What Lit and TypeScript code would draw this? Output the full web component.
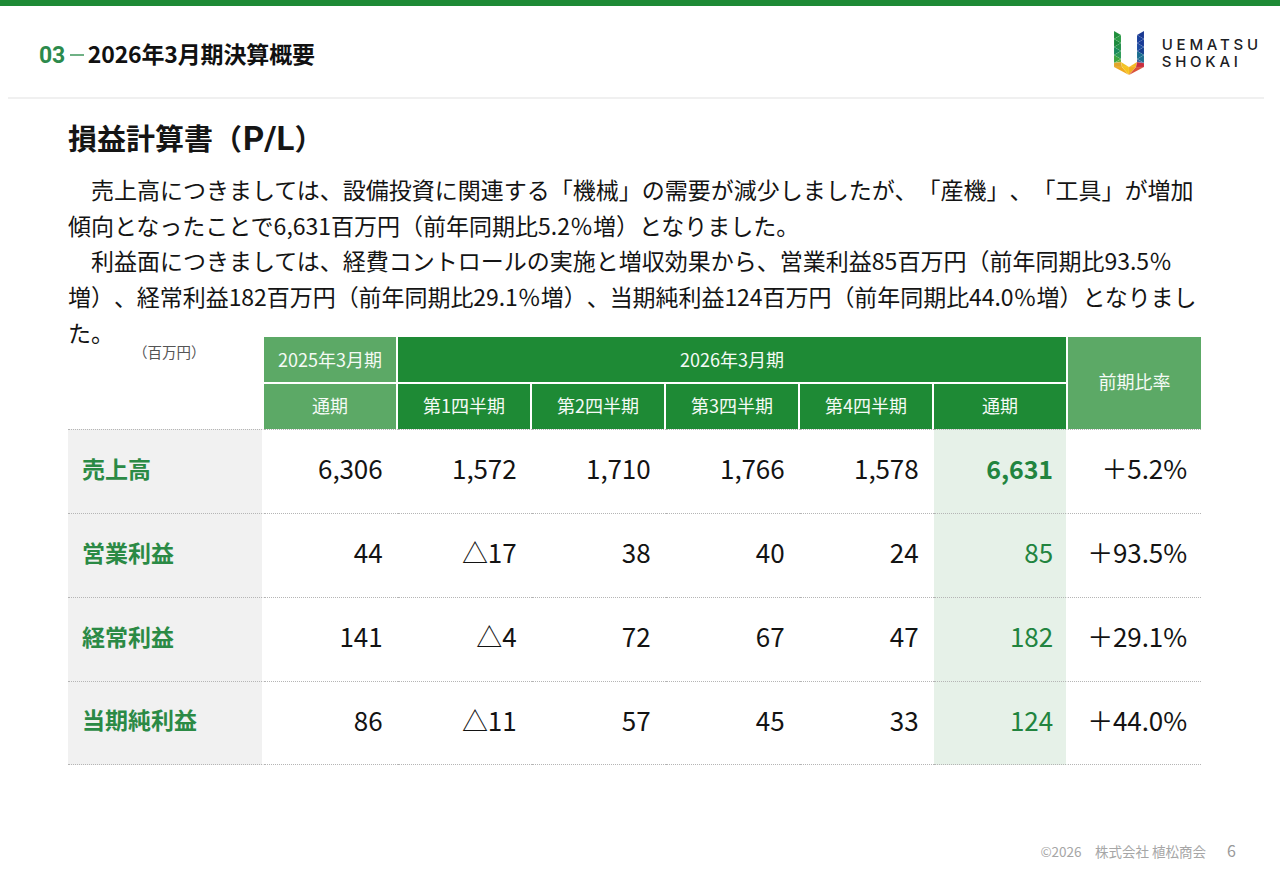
import { LitElement, html, css, svg } from "lit";
import { customElement } from "lit/decorators.js";

const rows = [
  { label: "売上高", cells: ["6,306", "1,572", "1,710", "1,766", "1,578", "6,631"], ratio: "＋5.2%", strong: true },
  { label: "営業利益", cells: ["44", "△17", "38", "40", "24", "85"], ratio: "＋93.5%" },
  { label: "経常利益", cells: ["141", "△4", "72", "67", "47", "182"], ratio: "＋29.1%" },
  { label: "当期純利益", cells: ["86", "△11", "57", "45", "33", "124"], ratio: "＋44.0%" },
];

const quarters = ["第1四半期", "第2四半期", "第3四半期", "第4四半期", "通期"];

const logoShapes: [string, string][] = [
  ["0,0 7,4 0,8", "#1f8f3c"],
  ["7,4 7,12 0,8", "#2a9b45"],
  ["0,8 7,12 0,16", "#1c8a3e"],
  ["7,12 7,20 0,16", "#22904a"],
  ["0,16 7,20 0,24", "#1a8a5c"],
  ["7,20 7,28 0,24", "#2a9a55"],
  ["0,24 7,28 0,32", "#3da43f"],
  ["7,28 7,31 0,32", "#6bb03a"],
  ["0,32 7,31 8,36 0,36", "#e2a52a"],
  ["0,36 8,36 15,44", "#f0a91e"],
  ["8,36 7,31 15,36", "#f3c222"],
  ["8,36 15,36 15,44", "#f7c31d"],
  ["15,36 23,31 22,36", "#f5b921"],
  ["15,36 22,36 15,44", "#f2ad1f"],
  ["22,36 30,36 15,44", "#d9503a"],
  ["23,31 30,32 30,36 22,36", "#c92d3f"],
  ["23,28 30,24 30,32", "#1f6f8e"],
  ["23,28 23,31 30,32", "#3a5fa0"],
  ["23,20 30,16 30,24", "#17408f"],
  ["23,20 23,28 30,24", "#1a6d90"],
  ["23,12 30,8 30,16", "#1a3c96"],
  ["23,12 23,20 30,16", "#1d4ca0"],
  ["23,4 30,0 30,8", "#1b3a92"],
  ["23,4 23,12 30,8", "#183f9b"],
];

@customElement("app-root")
export class AppRoot extends LitElement {
  static styles = css`
    :host {
      display: block;
      width: 1280px;
      height: 886px;
      position: relative;
      overflow: hidden;
      background: #fff;
      color: #111;
      font-family: "Noto Sans CJK JP", "Noto Sans", sans-serif;
      text-spacing-trim: space-all;
    }
    .topbar { height: 6px; background: #1e8a35; }
    .header {
      height: 91px;
      margin: 0 16px 0 8px;
      padding: 0 2.25px 0 31px;
      display: flex;
      align-items: center;
      justify-content: space-between;
      border-bottom: 2px solid #f0f0f0;
      box-sizing: content-box;
    }
    .crumb {
      font-size: 23px;
      font-weight: 700;
      display: flex;
      align-items: center;
      margin-top: 2px;
    }
    .crumb .num { color: #2c8a4c; font-family: "Roboto", sans-serif; letter-spacing: -0.3px; padding-top: 6px; }
    .crumb .dash { width: 14px; height: 2px; background: #6fb185; margin: 4px 4px 0 5px; }
    .crumb .name { color: #111; letter-spacing: -0.15px; }
    .logo { display: flex; align-items: center; gap: 18px; margin-top: 3px; }
    .logo svg { display: block; width: 30px; height: 44px; }
    .logo-text {
      font-family: "Inter", "Liberation Sans", sans-serif;
      font-size: 15px;
      line-height: 17px;
      letter-spacing: 3.75px;
      color: #1c2024;
      font-weight: 500;
      margin-top: -1px;
    }
    .main { padding: 0 0 0 68px; }
    h1 {
      margin: 0;
      padding-top: 18px;
      height: 40px;
      font-size: 29px;
      line-height: 40px;
      font-weight: 700;
      color: #151515;
    }
    h1 .latin { font-family: "Roboto", sans-serif; font-size: 33px; line-height: 1; padding-left: 1px; }
    .lead {
      margin-top: 15px;
      height: 165px;
      font-size: 23px;
      line-height: 35.7px;
      color: #141414;
    }
    .lead div { white-space: nowrap; }
    .lead div.tight { letter-spacing: -0.05px; }
    .table {
      display: grid;
      width: 1133px;
      grid-template-columns: 196px repeat(6, 134px) 133px;
      grid-template-rows: 47px 45px repeat(4, 84px);
    }
    .unit {
      grid-row: 1 / span 2;
      font-size: 14.5px;
      line-height: 20px;
      color: #555;
      padding: 5px 0 0 65px;
      white-space: nowrap;
    }
    .th {
      color: #f4faf5;
      font-size: 18px;
      display: flex;
      align-items: center;
      justify-content: center;
      box-sizing: border-box;
      padding-bottom: 2px;
      border-right: 2px solid #fff;
      border-bottom: 2px solid #fff;
    }
    .th.dark { background: #1e8a35; }
    .th.light { background: #5ca966; }
    .th.span6 { grid-column: span 5; }
    .th.tall { grid-row: 1 / span 2; grid-column: 8; border-right: 0; border-bottom: 0; padding-bottom: 4px; }
    .th.bottom { border-bottom: 0; padding-bottom: 3px; }
    .td {
      font-size: 26px;
      display: flex;
      align-items: center;
      justify-content: flex-end;
      padding: 0 15.5px 8px 0;
      border-top: 1px dotted #b5b5b5;
      box-sizing: border-box;
      color: #131313;
      letter-spacing: -0.1px;
    }
    .td.label {
      justify-content: flex-start;
      padding-left: 14px;
      padding-right: 0;
      background: #f1f1f1;
      border-right: 2px solid #fff;
      color: #2b8a45;
      font-weight: 700;
      font-size: 23px;
      letter-spacing: 0;
    }
    .td.hl { background: #e6f1e8; color: #22843f; border-right: 2px solid #fff; padding-right: 13px; }
    .td.hl.strong { font-weight: 700; font-size: 25px; }
    .td.ratio { padding-right: 14px; }
    .td.last { border-bottom: 1px dotted #b5b5b5; }
    .footer {
      position: absolute;
      right: 44px;
      bottom: 24px;
      display: flex;
      align-items: baseline;
      gap: 21px;
      color: #a6a6a6;
      font-size: 13.5px;
    }
    .footer .page { font-size: 16px; color: #999; }
    .footer .copy { white-space: pre; }
  `;

  render() {
    return html`
      <div class="topbar"></div>
      <div class="header">
        <div class="crumb">
          <span class="num">03</span><span class="dash"></span><span class="name">2026年3月期決算概要</span>
        </div>
        <div class="logo">
          <svg viewBox="0 0 30 44" aria-hidden="true">
            ${logoShapes.map(([p, c]) => svg`<polygon points=${p} fill=${c} stroke="#ffffff" stroke-opacity="0.25" stroke-width="0.3"></polygon>`)}
          </svg>
          <div class="logo-text">UEMATSU<br />SHOKAI</div>
        </div>
      </div>
      <div class="main">
        <h1>損益計算書（<span class="latin">P/L</span>）</h1>
        <div class="lead" lang="ja">
          <div>　売上高につきましては、設備投資に関連する「機械」の需要が減少しましたが、「産機」、「工具」が増加</div>
          <div>傾向となったことで6,631百万円（前年同期比5.2％増）となりました。</div>
          <div>　利益面につきましては、経費コントロールの実施と増収効果から、営業利益85百万円（前年同期比93.5％</div>
          <div class="tight">増）、経常利益182百万円（前年同期比29.1％増）、当期純利益124百万円（前年同期比44.0％増）となりまし</div>
          <div>た。</div>
        </div>
        <div class="table">
          <div class="unit">（百万円）</div>
          <div class="th light">2025年3月期</div>
          <div class="th dark span6">2026年3月期</div>
          <div class="th light tall">前期比率</div>
          <div class="th light bottom">通期</div>
          ${quarters.map((q) => html`<div class="th dark bottom">${q}</div>`)}
          ${rows.map(
            (r, i) => html`
              <div class="td label ${i === 3 ? "last" : ""}">${r.label}</div>
              ${r.cells.map(
                (c, j) => html`<div class="td ${j === 5 ? "hl" : ""} ${j === 5 && r.strong ? "strong" : ""} ${i === 3 ? "last" : ""}">${c}</div>`
              )}
              <div class="td ratio ${i === 3 ? "last" : ""}">${r.ratio}</div>
            `
          )}
        </div>
      </div>
      <div class="footer">
        <span class="copy">©2026　株式会社 植松商会</span><span class="page">6</span>
      </div>
    `;
  }
}
